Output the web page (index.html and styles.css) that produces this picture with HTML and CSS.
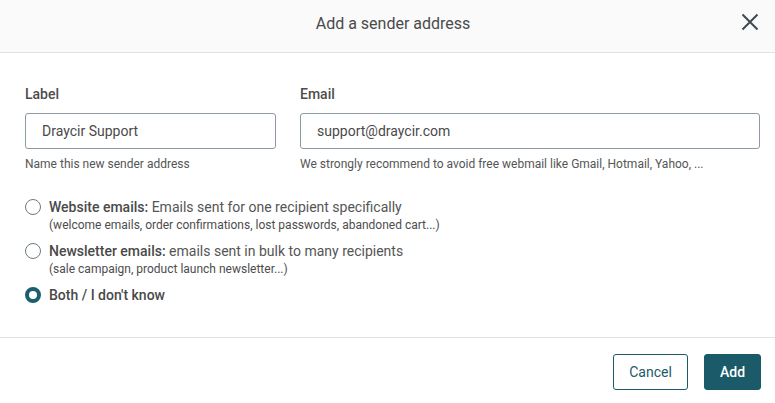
FILE: index.html
```html
<!DOCTYPE html>
<html lang="en">
<head>
<meta charset="utf-8">
<link rel="stylesheet" href="styles.css">
</head>
<body>
<div class="modal">
  <header class="modal-header">
    <h1 class="modal-title">Add a sender address</h1>
    <button class="close-btn" aria-label="Close">
      <svg width="18" height="18" viewBox="0 0 18 18"><path d="M1.5 1.5L16.5 16.5M16.5 1.5L1.5 16.5" stroke="#3d4a52" stroke-width="2" fill="none"/></svg>
    </button>
  </header>
  <main class="modal-body">
    <div class="fields">
      <div class="field field-label">
        <label class="field-name">Label</label>
        <div class="input">Draycir Support</div>
        <p class="help">Name this new sender address</p>
      </div>
      <div class="field field-email">
        <label class="field-name">Email</label>
        <div class="input">support@draycir.com</div>
        <p class="help">We strongly recommend to avoid free webmail like Gmail, Hotmail, Yahoo, ...</p>
      </div>
    </div>
    <div class="options">
      <div class="option">
        <span class="radio"></span>
        <div class="option-text">
          <div class="option-main"><b>Website emails:</b> Emails sent for one recipient specifically</div>
          <div class="option-sub">(welcome emails, order confirmations, lost passwords, abandoned cart...)</div>
        </div>
      </div>
      <div class="option">
        <span class="radio"></span>
        <div class="option-text">
          <div class="option-main"><b>Newsletter emails:</b> emails sent in bulk to many recipients</div>
          <div class="option-sub">(sale campaign, product launch newsletter...)</div>
        </div>
      </div>
      <div class="option">
        <span class="radio checked"></span>
        <div class="option-text">
          <div class="option-main"><b>Both / I don't know</b></div>
        </div>
      </div>
    </div>
  </main>
  <footer class="modal-footer">
    <button class="btn btn-secondary">Cancel</button>
    <button class="btn btn-primary">Add</button>
  </footer>
</div>
</body>
</html>
```
FILE: styles.css
```css
* { box-sizing: border-box; }
html, body { margin: 0; padding: 0; background: #fff; }
body { font-family: Roboto, "Liberation Sans", Arial, sans-serif; color: #4d4d4d; width: 775px; height: 403px; overflow: hidden; }
.modal { display: flex; flex-direction: column; height: 403px; }
.modal-header {
  height: 53px; background: #fafafa; border-bottom: 1px solid #e3e3e3;
  display: flex; align-items: center; justify-content: center; position: relative;
  padding-left: 11px;
}
.modal-title { margin: 0; font-size: 16px; font-weight: 400; color: #4a4a4a; padding-bottom: 6px; }
.close-btn {
  position: absolute; right: 16px; top: 13px; width: 18px; height: 18px; padding: 0;
  border: 0; background: transparent; display: flex;
}
.modal-body { padding: 33px 15px 0 25px; flex: 1; }
.fields { display: flex; gap: 24px; }
.field-label { width: 251px; }
.field-email { flex: 1; }
.field-name { display: block; font-size: 14px; font-weight: 500; color: #4d4d4d; line-height: 16px; margin-bottom: 11px; }
.input {
  height: 36px; border: 1px solid #8d9aa3; border-radius: 3px;
  padding: 0 16px; font-size: 14px; line-height: 34px; color: #4a4a4a;
}
.help { margin: 8px 0 0; font-size: 12px; line-height: 14px; color: #555; }
.options { margin-top: 26px; display: flex; flex-direction: column; gap: 8px; }
.option { display: flex; gap: 8px; align-items: flex-start; }
.radio {
  width: 16px; height: 16px; border-radius: 50%; border: 1px solid #6b7a83;
  flex: none; margin-top: 2px; background: #fff;
}
.radio.checked { border: 4px solid #1b5f6f; }
.option-main { font-size: 14px; line-height: 20px; color: #555; }
.option-main b { font-weight: 500; color: #4a4a4a; }
.option-sub { font-size: 12px; line-height: 16px; color: #4d4d4d; }
.modal-footer {
  height: 66px; border-top: 1px solid #e3e3e3; display: flex; justify-content: flex-end;
  align-items: flex-start; padding: 16px 14px 0 0; gap: 16px;
}
.btn { height: 36px; border-radius: 3px; font-family: inherit; font-size: 14px; padding: 0 15px; }
.btn-secondary { background: #fff; color: #1b5a68; border: 1px solid #1b5a68; width: 75px; }
.btn-primary { background: #1b5a68; color: #fff; border: 1px solid #1b5a68; width: 57px; font-weight: 500; }
```
